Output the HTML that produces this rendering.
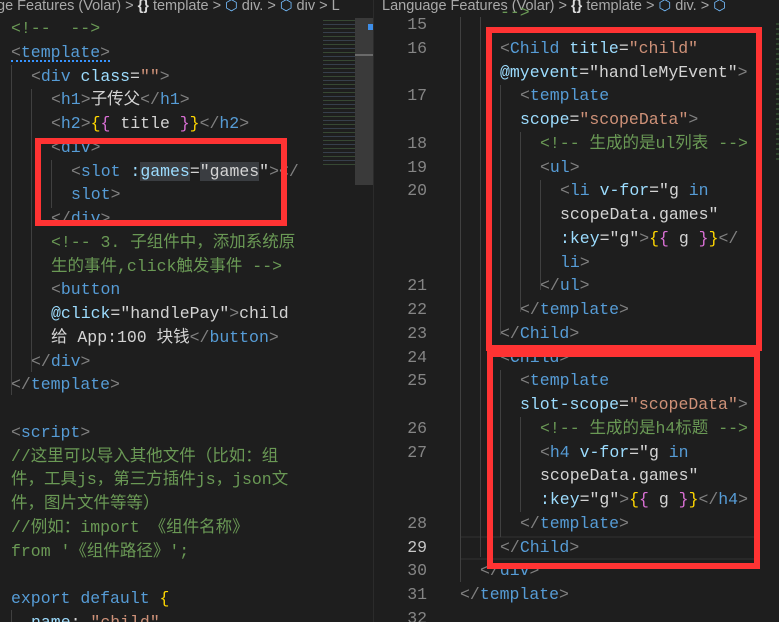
<!DOCTYPE html>
<html><head><meta charset="utf-8"><style>
html,body{margin:0;width:779px;height:622px;overflow:hidden}
body{background:#1e1e1e;position:relative;font-family:"Liberation Mono","Noto Sans CJK SC",monospace;font-size:16.5px}
.bc{position:absolute;top:0;height:17px;font-family:"Liberation Sans","Noto Sans CJK SC",sans-serif;font-size:14.5px;color:#a9a9a9;line-height:13px;white-space:nowrap;overflow:hidden}
.ln{position:absolute;white-space:pre;height:23.75px;line-height:23.75px;color:#d4d4d4}
.p{color:#808080}.t{color:#569cd6}.a{color:#9cdcfe}.s{color:#ce9178}.c{color:#6a9955}.y{color:#ffd700}.k{color:#da70d6}
.num{position:absolute;width:60px;text-align:right;color:#858585;line-height:23.75px;height:23.75px}
.g{position:absolute;width:1px;background:#404040}
.box{position:absolute;border:6px solid #f33;box-sizing:border-box}
.cube{color:#75beff}
</style></head><body>
<div class="bc" style="left:-3px;width:373px">ge Features (Volar) &gt; <b style="color:#ddd">{}</b> template &gt; <span class="cube">⬡</span> div. &gt; <span class="cube">⬡</span> div &gt; L</div>
<div class="bc" style="left:382px;width:397px">Language Features (Volar) &gt; <b style="color:#ddd">{}</b> template &gt; <span class="cube">⬡</span> div. &gt; <span class="cube">⬡</span></div>

<div class="g" style="left:11px;top:65px;height:330px"></div>
<div class="g" style="left:31px;top:89px;height:283px"></div>
<div class="g" style="left:51px;top:160px;height:48px"></div>
<div class="g" style="left:11px;top:610px;height:12px"></div>
<div style="position:absolute;left:11px;top:57px;width:99px;height:3px;border-bottom:2px dotted #3794ff"></div>
<div class="ln" style="left:11px;top:17px"><span class="c">&lt;!--  --&gt;</span></div>
<div class="ln" style="left:11px;top:40.75px"><span class="p">&lt;</span><span class="t">template</span><span class="p">&gt;</span></div>
<div class="ln" style="left:31px;top:64.5px"><span class="p">&lt;</span><span class="t">div</span> <span class="a">class</span>=<span class="s">""</span><span class="p">&gt;</span></div>
<div class="ln" style="left:51px;top:88.25px"><span class="p">&lt;</span><span class="t">h1</span><span class="p">&gt;</span>子传父<span class="p">&lt;/</span><span class="t">h1</span><span class="p">&gt;</span></div>
<div class="ln" style="left:51px;top:112px"><span class="p">&lt;</span><span class="t">h2</span><span class="p">&gt;</span><span class="y">{</span><span class="k">{</span> title <span class="k">}</span><span class="y">}</span><span class="p">&lt;/</span><span class="t">h2</span><span class="p">&gt;</span></div>
<div class="ln" style="left:51px;top:135.75px"><span class="p">&lt;</span><span class="t">div</span><span class="p">&gt;</span></div>
<div class="ln" style="left:71px;top:159.5px"><span class="p">&lt;</span><span class="t">slot</span> <span class="a">:<span style="background:#3a3d41">games</span></span>=<span style="background:#3a3d41">"games</span>"<span class="p">&gt;&lt;/</span></div>
<div class="ln" style="left:71px;top:183.25px"><span class="t">slot</span><span class="p">&gt;</span></div>
<div class="ln" style="left:51px;top:207px"><span class="p">&lt;/</span><span class="t">div</span><span class="p">&gt;</span></div>
<div class="ln" style="left:51px;top:230.75px"><span class="c">&lt;!-- 3. 子组件中，添加系统原</span></div>
<div class="ln" style="left:51px;top:254.5px"><span class="c">生的事件,click触发事件 --&gt;</span></div>
<div class="ln" style="left:51px;top:278.25px"><span class="p">&lt;</span><span class="t">button</span></div>
<div class="ln" style="left:51px;top:302px"><span class="a">@click</span>="handlePay"<span class="p">&gt;</span>child</div>
<div class="ln" style="left:51px;top:325.75px">给 App:100 块钱<span class="p">&lt;/</span><span class="t">button</span><span class="p">&gt;</span></div>
<div class="ln" style="left:31px;top:349.5px"><span class="p">&lt;/</span><span class="t">div</span><span class="p">&gt;</span></div>
<div class="ln" style="left:11px;top:373.25px"><span class="p">&lt;/</span><span class="t">template</span><span class="p">&gt;</span></div>
<div class="ln" style="left:11px;top:420.75px"><span class="p">&lt;</span><span class="t">script</span><span class="p">&gt;</span></div>
<div class="ln" style="left:11px;top:444.5px"><span class="c">//这里可以导入其他文件（比如：组</span></div>
<div class="ln" style="left:11px;top:468.25px"><span class="c">件，工具js，第三方插件js，json文</span></div>
<div class="ln" style="left:11px;top:492px"><span class="c">件，图片文件等等）</span></div>
<div class="ln" style="left:11px;top:515.75px"><span class="c">//例如：import 《组件名称》</span></div>
<div class="ln" style="left:11px;top:539.5px"><span class="c">from '《组件路径》';</span></div>
<div class="ln" style="left:11px;top:587px"><span class="t">export</span> <span class="t">default</span> <span class="y">{</span></div>
<div class="ln" style="left:31px;top:610.75px"><span class="a">name</span>: <span class="s">"child"</span></div>
<div class="box" style="left:35px;top:138px;width:252px;height:88px"></div>

<div style="position:absolute;left:323px;top:17px;width:32px;height:150px;opacity:.55;background:repeating-linear-gradient(#1e1e1e 0 3px,#4a6a44 3px 4px,#1e1e1e 4px 7px,#4a5a70 7px 8px)"></div>
<div style="position:absolute;left:355px;top:18px;width:18px;height:167px;background:#3a3a3a"></div>
<div style="position:absolute;left:355px;top:54px;width:18px;height:2px;background:#6a6a6a"></div>
<div style="position:absolute;left:368px;top:24px;width:5px;height:6px;background:#3e8ee8"></div>
<div style="position:absolute;left:373px;top:0;width:1px;height:622px;background:#2b2b2b"></div>

<div style="position:absolute;left:460px;top:536px;width:296px;height:24px;border-top:2px solid #282828;border-bottom:2px solid #282828;box-sizing:border-box"></div>
<div class="g" style="left:460px;top:17px;height:565px"></div>
<div class="g" style="left:480px;top:17px;height:540px"></div>
<div class="g" style="left:500px;top:85px;height:250px"></div>
<div class="g" style="left:520px;top:132px;height:180px"></div>
<div class="g" style="left:540px;top:180px;height:110px"></div>
<div class="g" style="left:500px;top:370px;height:167px"></div>
<div class="g" style="left:520px;top:417px;height:95px"></div>
<div class="num" style="left:367px;top:13px">15</div>
<div class="num" style="left:367px;top:36.75px">16</div>
<div class="num" style="left:367px;top:84.25px">17</div>
<div class="num" style="left:367px;top:131.75px">18</div>
<div class="num" style="left:367px;top:155.5px">19</div>
<div class="num" style="left:367px;top:179.25px">20</div>
<div class="num" style="left:367px;top:274.25px">21</div>
<div class="num" style="left:367px;top:298px">22</div>
<div class="num" style="left:367px;top:321.75px">23</div>
<div class="num" style="left:367px;top:345.5px">24</div>
<div class="num" style="left:367px;top:369.25px">25</div>
<div class="num" style="left:367px;top:416.75px">26</div>
<div class="num" style="left:367px;top:440.5px">27</div>
<div class="num" style="left:367px;top:511.75px">28</div>
<div class="num" style="left:367px;top:535.5px;color:#c6c6c6">29</div>
<div class="num" style="left:367px;top:559.25px">30</div>
<div class="num" style="left:367px;top:583px">31</div>
<div class="num" style="left:367px;top:606.75px">32</div>

<div class="ln" style="left:500px;top:1px"><span class="c">--&gt;</span></div>
<div class="ln" style="left:500px;top:36.75px"><span class="p">&lt;</span><span class="t">Child</span> <span class="a">title</span>=<span class="s">"child"</span></div>
<div class="ln" style="left:500px;top:60.5px"><span class="a">@myevent</span>="handleMyEvent"<span class="p">&gt;</span></div>
<div class="ln" style="left:520px;top:84.25px"><span class="p">&lt;</span><span class="t">template</span></div>
<div class="ln" style="left:520px;top:108px"><span class="a">scope</span>=<span class="s">"scopeData"</span><span class="p">&gt;</span></div>
<div class="ln" style="left:540px;top:131.75px"><span class="c">&lt;!-- 生成的是ul列表 --&gt;</span></div>
<div class="ln" style="left:540px;top:155.5px"><span class="p">&lt;</span><span class="t">ul</span><span class="p">&gt;</span></div>
<div class="ln" style="left:560px;top:179.25px"><span class="p">&lt;</span><span class="t">li</span> <span class="a">v-for</span>="g <span class="t">in</span></div>
<div class="ln" style="left:560px;top:203px">scopeData.games"</div>
<div class="ln" style="left:560px;top:226.75px"><span class="a">:key</span>="g"<span class="p">&gt;</span><span class="y">{</span><span class="k">{</span> g <span class="k">}</span><span class="y">}</span><span class="p">&lt;/</span></div>
<div class="ln" style="left:560px;top:250.5px"><span class="t">li</span><span class="p">&gt;</span></div>
<div class="ln" style="left:540px;top:274.25px"><span class="p">&lt;/</span><span class="t">ul</span><span class="p">&gt;</span></div>
<div class="ln" style="left:520px;top:298px"><span class="p">&lt;/</span><span class="t">template</span><span class="p">&gt;</span></div>
<div class="ln" style="left:500px;top:321.75px"><span class="p">&lt;/</span><span class="t">Child</span><span class="p">&gt;</span></div>
<div class="ln" style="left:500px;top:345.5px"><span class="p">&lt;</span><span class="t">Child</span><span class="p">&gt;</span></div>
<div class="ln" style="left:520px;top:369.25px"><span class="p">&lt;</span><span class="t">template</span></div>
<div class="ln" style="left:520px;top:393px"><span class="a">slot-scope</span>=<span class="s">"scopeData"</span><span class="p">&gt;</span></div>
<div class="ln" style="left:540px;top:416.75px"><span class="c">&lt;!-- 生成的是h4标题 --&gt;</span></div>
<div class="ln" style="left:540px;top:440.5px"><span class="p">&lt;</span><span class="t">h4</span> <span class="a">v-for</span>="g <span class="t">in</span></div>
<div class="ln" style="left:540px;top:464.25px">scopeData.games"</div>
<div class="ln" style="left:540px;top:488px"><span class="a">:key</span>="g"<span class="p">&gt;</span><span class="y">{</span><span class="k">{</span> g <span class="k">}</span><span class="y">}</span><span class="p">&lt;/</span><span class="t">h4</span><span class="p">&gt;</span></div>
<div class="ln" style="left:520px;top:511.75px"><span class="p">&lt;/</span><span class="t">template</span><span class="p">&gt;</span></div>
<div class="ln" style="left:500px;top:535.5px"><span class="p">&lt;/</span><span class="t">Child</span><span class="p">&gt;</span></div>
<div class="ln" style="left:480px;top:559.25px"><span class="p">&lt;/</span><span class="t">div</span><span class="p">&gt;</span></div>
<div class="ln" style="left:460px;top:583px"><span class="p">&lt;/</span><span class="t">template</span><span class="p">&gt;</span></div>
<div style="position:absolute;left:765px;top:17px;width:14px;height:605px;background:#1e1e1e"></div>
<div style="position:absolute;left:776px;top:20px;width:3px;height:140px;opacity:.5;background:repeating-linear-gradient(#1e1e1e 0 3px,#3f6a3a 3px 5px)"></div>
<div class="box" style="left:486px;top:27px;width:276px;height:324px"></div>
<div class="box" style="left:487px;top:351px;width:273px;height:218px"></div>
</body></html>
